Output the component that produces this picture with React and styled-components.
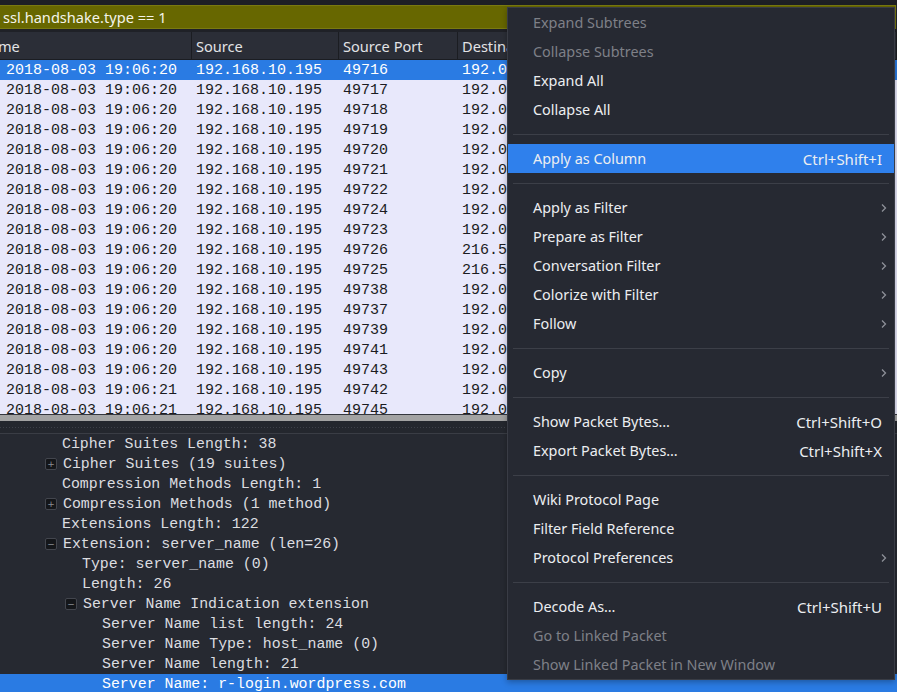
import React from "react";
import styled, { createGlobalStyle } from "styled-components";

const GlobalStyle = createGlobalStyle`
    html, body {
        margin: 0;
        padding: 0;
        background: #23262e;
        overflow: hidden;
    }
`;

const Window = styled.div`
    position: relative;
    width: 897px;
    height: 692px;
    overflow: hidden;
    background: #23262e;
    font-family: "Noto Sans", "Open Sans", sans-serif;
`;

const TopStrip = styled.div`
    height: 5px;
    background: #1d1f25;
`;

const FilterBar = styled.div`
    height: 22px;
    margin-right: 1px;
    background: #676700;
    border: 1px solid #7a7a10;
    border-left: none;
    display: flex;
    align-items: center;
    padding-left: 3px;
    color: #f4f4ea;
    font-size: 14.6px;
`;

const Gap = styled.div`
    height: 3px;
    background: #1f2127;
`;

const PacketList = styled.div`
    height: 382px;
    overflow: hidden;
    background: #e8e8fb;
`;

const HeaderRow = styled.div`
    display: grid;
    grid-template-columns: 192px 147px 119px 1fr;
    height: 27px;
    background: #2b2e37;
    border-bottom: 1px solid #1b1d22;
`;

const HeaderCell = styled.div`
    display: flex;
    align-items: center;
    padding-left: ${p => (p.$first ? "0" : "4px")};
    border-right: 1px solid #1b1d22;
    color: #e2e3e6;
    font-size: 14.6px;
    white-space: nowrap;
    overflow: hidden;
`;

const Clipped = styled.span`
    margin-left: -14px;
`;

const Row = styled.div`
    display: grid;
    grid-template-columns: 192px 147px 119px 1fr;
    height: 20px;
    align-items: center;
    background: ${p => (p.$selected ? "#2a7be3" : "#e8e8fb")};
    color: ${p => (p.$selected ? "#ffffff" : "#1c1c22")};
    font-family: "Liberation Mono", "DejaVu Sans Mono", monospace;
    font-size: 15px;
    white-space: nowrap;
`;

const Cell = styled.div`
    padding-left: ${p => (p.$first ? "6px" : "4px")};
    overflow: hidden;
`;

const Splitter = styled.div`
    height: 6px;
    background: #a3a3a3;
    border-top: 1px solid #34363d;
`;

const Handle = styled.div`
    height: 12px;
    background: #24272e;
    border-bottom: 1px solid #3a3d45;
    display: flex;
    align-items: center;
`;

const Dots = styled.div`
    height: 1px;
    flex: 1;
    background-image: linear-gradient(90deg, #3d4049 50%, transparent 50%);
    background-size: 3px 1px;
`;

const Details = styled.div`
    background: #262931;
    height: 260px;
    color: #dcdde0;
    font-family: "Liberation Mono", "DejaVu Sans Mono", monospace;
    font-size: 14.9px;
`;

const TreeLine = styled.div`
    height: 20px;
    display: flex;
    align-items: center;
    padding-left: ${p => 62 + p.$level * 20}px;
    background: ${p => (p.$selected ? "#2a7be3" : "transparent")};
    color: ${p => (p.$selected ? "#ffffff" : "#dcdde0")};
    white-space: nowrap;
`;

const Expander = styled.span`
    width: 10px;
    height: 10px;
    margin-left: -17px;
    margin-right: 6px;
    border: 1px solid #43464e;
    border-radius: 2px;
    background: #14161a;
    color: #8c8f96;
    font-family: "DejaVu Sans", sans-serif;
    font-size: 9px;
    line-height: 10px;
    text-align: center;
    flex-shrink: 0;
`;

const Menu = styled.div`
    position: absolute;
    left: 507px;
    top: 7px;
    width: 386px;
    padding: 0;
    background: #262932;
    border: 1px solid #393c45;
    box-shadow: 0 2px 6px rgba(0, 0, 0, 0.3);
    font-family: "Noto Sans", "Open Sans", sans-serif;
    font-size: 14.4px;
`;

const MenuItem = styled.div`
    height: 29px;
    display: flex;
    align-items: center;
    padding: 0 12px 0 25px;
    background: ${p => (p.$active ? "#2f80ec" : "transparent")};
    color: ${p => (p.$disabled ? "#7e8088" : "#eceef1")};
`;

const Label = styled.span`
    flex: 1;
`;

const Shortcut = styled.span`
    color: #eceef1;
    font-size: 15px;
`;

const Arrow = styled.svg`
    width: 8px;
    height: 10px;
    margin-right: -6px;
`;

const Separator = styled.div`
    height: 20px;
    display: flex;
    align-items: center;
    padding: 0 5px;

    &::after {
        content: "";
        flex: 1;
        height: 1px;
        background: #3c3f48;
    }
`;

const packets = [
    ["20", "49716", "192.0"],
    ["20", "49717", "192.0"],
    ["20", "49718", "192.0"],
    ["20", "49719", "192.0"],
    ["20", "49720", "192.0"],
    ["20", "49721", "192.0"],
    ["20", "49722", "192.0"],
    ["20", "49724", "192.0"],
    ["20", "49723", "192.0"],
    ["20", "49726", "216.5"],
    ["20", "49725", "216.5"],
    ["20", "49738", "192.0"],
    ["20", "49737", "192.0"],
    ["20", "49739", "192.0"],
    ["20", "49741", "192.0"],
    ["20", "49743", "192.0"],
    ["21", "49742", "192.0"],
    ["21", "49745", "192.0"],
];

const tree = [
    { level: 0, text: "Cipher Suites Length: 38" },
    { level: 0, text: "Cipher Suites (19 suites)", exp: "+" },
    { level: 0, text: "Compression Methods Length: 1" },
    { level: 0, text: "Compression Methods (1 method)", exp: "+" },
    { level: 0, text: "Extensions Length: 122" },
    { level: 0, text: "Extension: server_name (len=26)", exp: "−" },
    { level: 1, text: "Type: server_name (0)" },
    { level: 1, text: "Length: 26" },
    { level: 1, text: "Server Name Indication extension", exp: "−" },
    { level: 2, text: "Server Name list length: 24" },
    { level: 2, text: "Server Name Type: host_name (0)" },
    { level: 2, text: "Server Name length: 21" },
    { level: 2, text: "Server Name: r-login.wordpress.com", selected: true },
];

const menu = [
    { label: "Expand Subtrees", disabled: true },
    { label: "Collapse Subtrees", disabled: true },
    { label: "Expand All" },
    { label: "Collapse All" },
    "sep",
    { label: "Apply as Column", shortcut: "Ctrl+Shift+I", active: true },
    "sep",
    { label: "Apply as Filter", sub: true },
    { label: "Prepare as Filter", sub: true },
    { label: "Conversation Filter", sub: true },
    { label: "Colorize with Filter", sub: true },
    { label: "Follow", sub: true },
    "sep",
    { label: "Copy", sub: true },
    "sep",
    { label: "Show Packet Bytes…", shortcut: "Ctrl+Shift+O" },
    { label: "Export Packet Bytes…", shortcut: "Ctrl+Shift+X" },
    "sep",
    { label: "Wiki Protocol Page" },
    { label: "Filter Field Reference" },
    { label: "Protocol Preferences", sub: true },
    "sep",
    { label: "Decode As…", shortcut: "Ctrl+Shift+U" },
    { label: "Go to Linked Packet", disabled: true },
    { label: "Show Linked Packet in New Window", disabled: true },
];

const SubArrow = () => (
    <Arrow viewBox="0 0 8 10">
        <path d="M2 1.5 L5.5 5 L2 8.5" fill="none" stroke="#8d9098" strokeWidth="1.3" />
    </Arrow>
);

const App = () => {
    return (
        <>
            <GlobalStyle />
            <Window>
                <TopStrip />
                <FilterBar>ssl.handshake.type == 1</FilterBar>
                <Gap />
                <PacketList>
                    <HeaderRow>
                        <HeaderCell $first><Clipped>Time</Clipped></HeaderCell>
                        <HeaderCell>Source</HeaderCell>
                        <HeaderCell>Source Port</HeaderCell>
                        <HeaderCell>Destination</HeaderCell>
                    </HeaderRow>
                    {packets.map(([sec, port, dst], i) => (
                        <Row key={port} $selected={i === 0}>
                            <Cell $first>2018-08-03 19:06:{sec}</Cell>
                            <Cell>192.168.10.195</Cell>
                            <Cell>{port}</Cell>
                            <Cell>{dst}</Cell>
                        </Row>
                    ))}
                </PacketList>
                <Splitter />
                <Handle><Dots /></Handle>
                <Details>
                    {tree.map((line, i) => (
                        <TreeLine key={i} $level={line.level} $selected={line.selected}>
                            {line.exp && <Expander>{line.exp}</Expander>}
                            {line.text}
                        </TreeLine>
                    ))}
                </Details>
                <Menu>
                    {menu.map((item, i) =>
                        item === "sep" ? (
                            <Separator key={i} />
                        ) : (
                            <MenuItem key={i} $active={item.active} $disabled={item.disabled}>
                                <Label>{item.label}</Label>
                                {item.shortcut && <Shortcut>{item.shortcut}</Shortcut>}
                                {item.sub && <SubArrow />}
                            </MenuItem>
                        )
                    )}
                </Menu>
            </Window>
        </>
    );
};

export default App;
